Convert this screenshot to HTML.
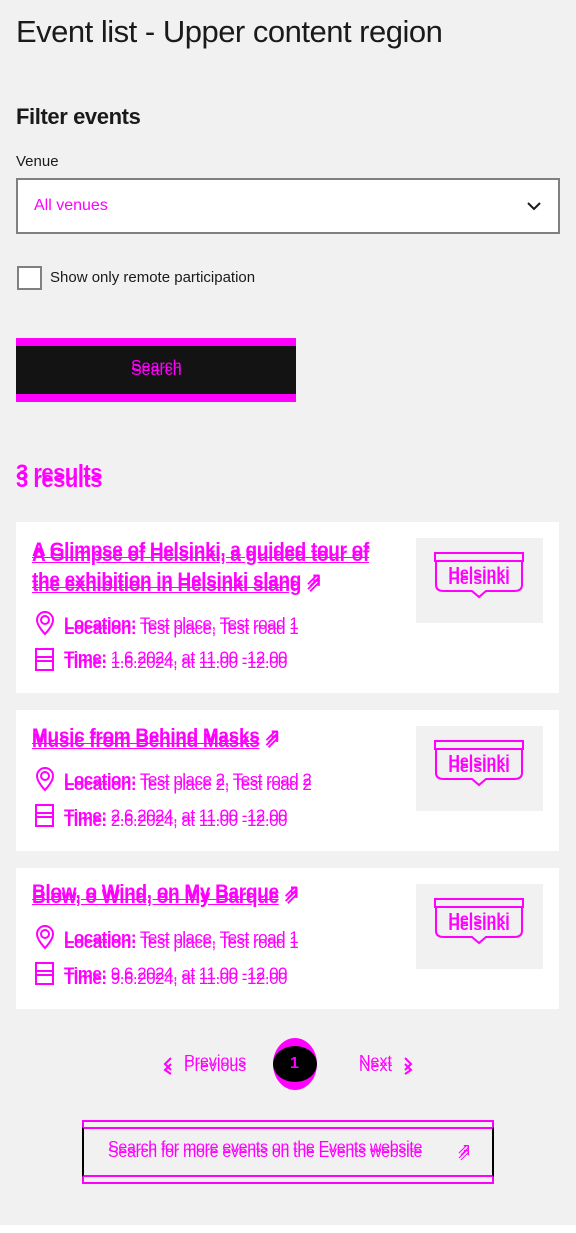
<!DOCTYPE html><html><head><style>
*{margin:0;padding:0;box-sizing:border-box}
body{width:576px;height:1233px;background:#f1f1f1;font-family:"Liberation Sans",sans-serif;position:relative;overflow:hidden;color:#1a1a1a}
.a{position:absolute}
.m{color:#f0f;text-shadow:0 5px 0 #f0f}
.card{position:absolute;left:16px;width:543px;background:#fff}
.t{position:absolute;left:16px;top:14px;width:350px;font-size:19px;font-weight:bold;line-height:30px;letter-spacing:-0.3px}
.t span{text-decoration:underline;text-decoration-color:#f0f}
.row{position:absolute;left:16px;font-size:17px;letter-spacing:-0.5px;white-space:nowrap}
.row b{font-weight:bold}
.img{position:absolute;right:16px;width:127px;height:85px;background:#f1f1f1}
.logo{position:absolute;left:18px;top:14px}
</style></head><body>
<div class="a" style="left:16px;top:14px;font-size:31px;letter-spacing:-0.5px">Event list - Upper content region</div>
<div class="a" style="left:16px;top:104px;font-size:22px;font-weight:bold;letter-spacing:-0.4px">Filter events</div>
<div class="a" style="left:16px;top:153px;font-size:15px">Venue</div>
<div class="a" style="left:16px;top:178px;width:544px;height:56px;background:#fff;border:2px solid #808080"></div>
<div class="a" style="left:34px;top:197px;font-size:16px;color:#f0f">All venues</div>
<svg class="a" style="left:526px;top:199px" width="16" height="14"><path d="M2 4l6 6 6-6" fill="none" stroke="#1a1a1a" stroke-width="2"/></svg>
<div class="a" style="left:17px;top:266px;width:25px;height:24px;border:2px solid #808080;background:#fff"></div>
<div class="a" style="left:50px;top:269px;font-size:15px">Show only remote participation</div>
<div class="a" style="left:16px;top:338px;width:280px;height:64px;background:#f0f"></div>
<div class="a" style="left:16px;top:346px;width:280px;height:48px;background:#131313"></div>
<div class="a m" style="left:131px;top:358px;font-size:16px;text-shadow:0 4px 0 #f0f">Search</div>
<div class="a m" style="left:16px;top:460px;font-size:22px;font-weight:bold;text-shadow:0 7px 0 #f0f;letter-spacing:-0.5px">3 results</div>

<div class="card" style="top:522px;height:171px">
<div class="t m"><span>A Glimpse of Helsinki, a guided tour of the exhibition in Helsinki slang</span> ⇗</div>
<svg class="a" style="left:18px;top:88px" width="22" height="30"><path d="M11 2a8 8 0 0 1 8 8c0 6-8 14-8 14s-8-8-8-14a8 8 0 0 1 8-8z" fill="none" stroke="#f0f" stroke-width="2"/><circle cx="11" cy="10" r="4" fill="none" stroke="#f0f" stroke-width="2"/></svg>
<div class="row m" style="top:92px"><span style="margin-left:32px"><b>Location:</b> Test place, Test road 1</span></div>
<svg class="a" style="left:18px;top:124px" width="22" height="26"><rect x="2" y="3" width="17" height="21" fill="none" stroke="#f0f" stroke-width="2"/><path d="M2 11h17M2 15h17" stroke="#f0f" stroke-width="2"/></svg>
<div class="row m" style="top:126px"><span style="margin-left:32px"><b>Time:</b> 1.6.2024, at 11.00 -12.00</span></div>
<div class="img" style="top:16px"><svg class="logo" width="92" height="50"><rect x="1" y="1" width="88" height="8" fill="none" stroke="#f0f" stroke-width="2"/><path d="M2 9v24q0 6 8 6h28l7 6 7-6h28q8 0 8-6V9" fill="none" stroke="#f0f" stroke-width="2"/><text x="45" y="26" text-anchor="middle" font-family="Liberation Sans" font-weight="bold" font-size="16" fill="#f0f">Helsinki</text><text x="45" y="32" text-anchor="middle" font-family="Liberation Sans" font-weight="bold" font-size="16" fill="#f0f">Helsinki</text></svg></div>
</div>

<div class="card" style="top:710px;height:141px">
<div class="t m" style="top:12px"><span>Music from Behind Masks</span> ⇗</div>
<svg class="a" style="left:18px;top:56px" width="22" height="30"><path d="M11 2a8 8 0 0 1 8 8c0 6-8 14-8 14s-8-8-8-14a8 8 0 0 1 8-8z" fill="none" stroke="#f0f" stroke-width="2"/><circle cx="11" cy="10" r="4" fill="none" stroke="#f0f" stroke-width="2"/></svg>
<div class="row m" style="top:60px"><span style="margin-left:32px"><b>Location:</b> Test place 2, Test road 2</span></div>
<svg class="a" style="left:18px;top:92px" width="22" height="26"><rect x="2" y="3" width="17" height="21" fill="none" stroke="#f0f" stroke-width="2"/><path d="M2 11h17M2 15h17" stroke="#f0f" stroke-width="2"/></svg>
<div class="row m" style="top:96px"><span style="margin-left:32px"><b>Time:</b> 2.6.2024, at 11.00 -12.00</span></div>
<div class="img" style="top:16px"><svg class="logo" width="92" height="50"><rect x="1" y="1" width="88" height="8" fill="none" stroke="#f0f" stroke-width="2"/><path d="M2 9v24q0 6 8 6h28l7 6 7-6h28q8 0 8-6V9" fill="none" stroke="#f0f" stroke-width="2"/><text x="45" y="26" text-anchor="middle" font-family="Liberation Sans" font-weight="bold" font-size="16" fill="#f0f">Helsinki</text><text x="45" y="32" text-anchor="middle" font-family="Liberation Sans" font-weight="bold" font-size="16" fill="#f0f">Helsinki</text></svg></div>
</div>

<div class="card" style="top:868px;height:141px">
<div class="t m" style="top:10px"><span>Blow, o Wind, on My Barque</span> ⇗</div>
<svg class="a" style="left:18px;top:56px" width="22" height="30"><path d="M11 2a8 8 0 0 1 8 8c0 6-8 14-8 14s-8-8-8-14a8 8 0 0 1 8-8z" fill="none" stroke="#f0f" stroke-width="2"/><circle cx="11" cy="10" r="4" fill="none" stroke="#f0f" stroke-width="2"/></svg>
<div class="row m" style="top:60px"><span style="margin-left:32px"><b>Location:</b> Test place, Test road 1</span></div>
<svg class="a" style="left:18px;top:92px" width="22" height="26"><rect x="2" y="3" width="17" height="21" fill="none" stroke="#f0f" stroke-width="2"/><path d="M2 11h17M2 15h17" stroke="#f0f" stroke-width="2"/></svg>
<div class="row m" style="top:96px"><span style="margin-left:32px"><b>Time:</b> 9.6.2024, at 11.00 -12.00</span></div>
<div class="img" style="top:16px"><svg class="logo" width="92" height="50"><rect x="1" y="1" width="88" height="8" fill="none" stroke="#f0f" stroke-width="2"/><path d="M2 9v24q0 6 8 6h28l7 6 7-6h28q8 0 8-6V9" fill="none" stroke="#f0f" stroke-width="2"/><text x="45" y="26" text-anchor="middle" font-family="Liberation Sans" font-weight="bold" font-size="16" fill="#f0f">Helsinki</text><text x="45" y="32" text-anchor="middle" font-family="Liberation Sans" font-weight="bold" font-size="16" fill="#f0f">Helsinki</text></svg></div>
</div>

<svg class="a" style="left:162px;top:1056px" width="12" height="20"><path d="M9 2l-6 6 6 6M9 8l-6 6 6 4" fill="none" stroke="#f0f" stroke-width="2"/></svg>
<div class="a m" style="left:184px;top:1053px;font-size:16px;text-shadow:0 5px 0 #f0f">Previous</div>
<div class="a" style="left:273px;top:1038px;width:44px;height:52px;border-radius:50%;background:#f0f"></div>
<div class="a" style="left:273px;top:1046px;width:44px;height:36px;border-radius:50%;background:#000"></div>
<div class="a" style="left:290px;top:1055px;font-size:16px;color:#f0f;font-weight:bold">1</div>
<div class="a m" style="left:359px;top:1053px;font-size:16px">Next</div>
<svg class="a" style="left:402px;top:1056px" width="12" height="20"><path d="M3 2l6 6-6 6M3 8l6 6-6 4" fill="none" stroke="#f0f" stroke-width="2"/></svg>

<div class="a" style="left:82px;top:1120px;width:412px;height:64px;border:2px solid #f0f"></div>
<div class="a" style="left:82px;top:1127px;width:412px;height:50px;border:2px solid #000;border-top-color:#f0f;border-bottom-color:#f0f"></div>
<div class="a m" style="left:108px;top:1139px;font-size:16px;letter-spacing:-0.3px;text-shadow:0 5px 0 #f0f">Search for more events on the Events website</div>
<div class="a m" style="left:457px;top:1140px;font-size:17px">⇗</div>
<div class="a" style="left:0;top:1225px;width:576px;height:8px;background:#fff"></div>
</body></html>
